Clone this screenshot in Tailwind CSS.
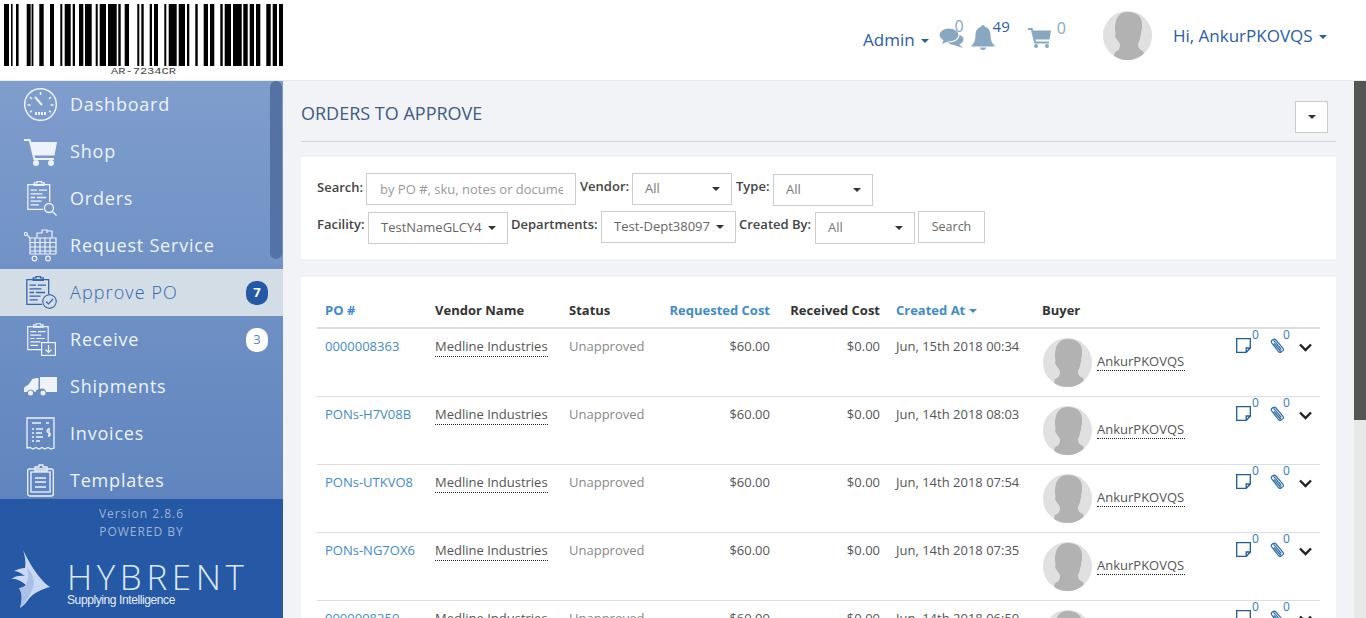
<!DOCTYPE html>
<html lang="en">
<head>
    <meta charset="UTF-8">
    <title>Orders to approve</title>
    <script src="https://cdn.jsdelivr.net/npm/@tailwindcss/browser@4"></script>
</head>
<body class="h-[618px] w-[1366px] overflow-hidden bg-white font-['Open_Sans',sans-serif] text-[13px] text-[#555]">

    <!-- shared shapes -->
    <svg class="hidden">
        <symbol id="avatar" viewBox="0 0 49 49">
            <rect width="49" height="49" fill="#e0e0e0"/>
            <path fill="#b2b2b2" d="M25 1c8 0 14 4 14 12 0 4 0 6-1 8 1 2-1 4-1 7-1 3-2 4-2 6 0 3 2 5 5 6 l3 9H10l2-8c3-1 5-3 5-7 0-3-3-4-5-9 1-2 0-4 0-7C12 7 16 1 25 1z"/>
        </symbol>
        <symbol id="board" viewBox="0 0 34 36">
            <g fill="none" stroke="currentColor" stroke-width="1.4">
                <path d="M7 4h19v19M19 31H2V4h5"/>
                <path d="M9 4V2h3V0.7h5V2h3v2.6H9z"/>
                <path d="M5 10h7M14 10h9M5 14h13M5 18h5M12 18h10M5 22h12M5 26h9"/>
            </g>
        </symbol>
    </svg>

    <!-- Top bar -->
    <header class="flex h-[81px] border-b border-[#e6e9ee] bg-white">
        <div class="w-[283px] shrink-0">
            <svg width="283" height="80" viewBox="0 0 283 80">
                <path fill="#000" d="M4 4h5v62H4zM11 4h1.6v62H11zM16 4h2.6v62H16zM26.7 4h4v62h-4zM31.6 4h1.8v62h-1.8zM39.3 4h4.4v62h-4.4zM50 4h4v62h-4zM60.3 4h2v62h-2zM64.7 4h6v62h-6zM72.7 4h2.3v62h-2.3zM79 4h4.3v62H79zM85 4h6.7v62H85zM95.7 4h2v62h-2zM99.7 4h6.3v62h-6.3zM108 4h8.7v62H108zM118.3 4h2.4v62h-2.4zM124.7 4h4.3v62h-4.3zM137.3 4h2v62h-2zM141.3 4h2.4v62h-2.4zM149.7 4h2.3v62h-2.3zM154 4h4v62h-4zM164.3 4h2v62h-2zM168.7 4h8v62h-8zM178.7 4h6.3v62h-6.3zM187 4h2.3v62H187zM195.3 4h2.4v62h-2.4zM203.7 4h4.3v62h-4.3zM210 4h4.3v62H210zM220.3 4h2.4v62h-2.4zM224.7 4h6.3v62h-6.3zM233 4h8.7v62H233zM243.3 4h4.4v62h-4.4zM249.7 4h4.3v62h-4.3zM256 4h4.3v62H256zM266.3 4h4.4v62h-4.4zM272.7 4h4.3v62h-4.3zM279 4h4v62h-4z"/>
                <text x="111" y="74" textLength="65" lengthAdjust="spacingAndGlyphs" font-family="Liberation Mono, monospace" font-size="9" fill="#444">AR-7234CR</text>
            </svg>
        </div>
        <div class="flex flex-1 text-[#2a5ca8]">
            <span class="ml-[580px] mt-[28px] text-[17px] leading-[24px]">Admin</span>
            <span class="ml-[6px] mt-[39px] h-0 w-0 border-x-[4px] border-t-[4px] border-x-transparent border-t-[#2a5ca8]"></span>
            <!-- chat -->
            <div class="ml-[10px] mt-[15px] flex h-[34px] w-[32px] text-[#88a8c2]">
                <svg class="mt-[13px] h-[20px] w-[25px] shrink-0" viewBox="0 0 25 20" fill="currentColor">
                    <ellipse cx="16" cy="11.500" rx="8.500" ry="5.500"/>
                    <path d="M19 15l5 5-9-3z"/>
                    <ellipse cx="10" cy="7" rx="10" ry="7" stroke="#fff" stroke-width="1.200"/>
                    <path d="M5 11l-2 5 7-3z"/>
                </svg>
                <span class="-ml-[9px] h-fit text-[16px] leading-[22px]">0</span>
            </div>
            <!-- bell -->
            <div class="ml-[0px] mt-[14px] flex">
                <svg class="mt-[11px] h-[25px] w-[24px] shrink-0 text-[#88a8c2]" viewBox="0 0 24 25" fill="currentColor">
                    <path d="M12 0c1 0 1.800.8 1.800 1.800 4 1 5.700 4.300 5.700 8.200 0 5 1.500 8.500 4 10.500v1H.5v-1C3 18.500 4.500 15 4.500 10c0-3.900 1.700-7.200 5.700-8.200C10.200.8 11 0 12 0zM9 22.500h6c0 1.500-1.300 2.500-3 2.500s-3-1-3-2.500z"/>
                </svg>
                <span class="-ml-[2px] mt-[1px] h-fit text-[15px] leading-[22px] text-[#2a5ca8]">49</span>
            </div>
            <!-- cart -->
            <div class="ml-[18px] mt-[17px] flex text-[#88a8c2]">
                <svg class="mt-[11px] h-[20px] w-[23px] shrink-0" viewBox="0 0 23 20" fill="currentColor">
                    <path d="M0 0h4.500l.7 2.500H23l-1.500 9H7.500l.4 2H21v2H6.300L3 2H0z"/>
                    <circle cx="8" cy="18" r="2"/><circle cx="19" cy="18" r="2"/>
                </svg>
                <span class="ml-[6px] h-fit text-[16px] leading-[22px]">0</span>
            </div>
            <svg class="ml-[37px] mt-[11px] h-[49px] w-[49px] rounded-full"><use href="#avatar"/></svg>
            <span class="ml-[21px] mt-[24px] h-fit text-[17px] leading-[24px]">Hi, AnkurPKOVQS</span>
            <span class="ml-[6px] mt-[35px] h-0 w-0 border-x-[4px] border-t-[4px] border-x-transparent border-t-[#2a5ca8]"></span>
        </div>
    </header>

    <div class="flex h-[537px]">
        <!-- Sidebar -->
        <aside class="relative flex w-[283px] shrink-0 flex-col">
            <nav class="h-[418px] overflow-hidden bg-linear-to-b from-[#7f9dcd] to-[#6085be] text-[18px] tracking-[0.8px] text-[#eef3fb]">
                <a class="flex h-[47px] items-center">
                    <svg class="ml-[24px] h-[33px] w-[33px]" viewBox="0 0 33 33" fill="none" stroke="currentColor" stroke-width="1.500">
                        <circle cx="16.500" cy="16.500" r="15.800"/>
                        <path d="M16.500 4v3M6 9l2 2M27 9l-2 2M3.500 17h3M26.500 17h3M6 24l2-1M27 24l-2-1"/>
                        <path d="M11 9l7 8" stroke-width="2"/>
                        <path d="M12 24v3M15 24v3M18 24v3M21 24v3" stroke-width="2"/>
                    </svg>
                    <span class="ml-[13px]">Dashboard</span>
                </a>
                <a class="flex h-[47px] items-center">
                    <svg class="ml-[24px] mt-[2px] h-[27px] w-[33px]" viewBox="0 0 33 27" fill="currentColor">
                        <path d="M0 0h6l1.500 3H33l-2.500 13.500H10.500l.7 2.500H30v2H9.500L5 2H0z"/>
                        <circle cx="12" cy="24" r="3"/><circle cx="27" cy="24" r="3"/>
                    </svg>
                    <span class="ml-[13px]">Shop</span>
                </a>
                <a class="flex h-[47px] items-center">
                    <div class="relative ml-[26px] h-[35px] w-[31px]">
                        <svg class="h-[33px] w-[31px]"><use href="#board"/></svg>
                        <svg class="absolute bottom-0 right-0 h-[14px] w-[14px]" viewBox="0 0 14 14" fill="none" stroke="currentColor" stroke-width="1.300"><circle cx="6" cy="6" r="4.500"/><path d="M9.500 9.500L13.500 13.500"/></svg>
                    </div>
                    <span class="ml-[13px]">Orders</span>
                </a>
                <a class="flex h-[47px] items-center">
                    <svg class="ml-[24px] h-[33px] w-[33px]" viewBox="0 0 33 33" fill="none" stroke="currentColor" stroke-width="1.200">
                        <circle cx="1.800" cy="5" r="1.500"/>
                        <path d="M3 6l3 3v16h26"/>
                        <path d="M6 9h26v16M6 13.500h26M6 18h26M6 22h26M11 9v16M16 9v16M21 9v16M26 9v16"/>
                        <path d="M13 9V4h5V1h5v3M23 2h5v7"/>
                        <circle cx="10.500" cy="29.500" r="2.300"/><circle cx="24" cy="29.500" r="2.300"/>
                    </svg>
                    <span class="ml-[13px]">Request Service</span>
                </a>
                <a class="flex h-[47px] items-center bg-[#d3dde6] text-[#3465ad]">
                    <div class="relative ml-[25px] h-[33px] w-[32px]">
                        <svg class="h-[33px] w-[31px]"><use href="#board"/></svg>
                        <svg class="absolute bottom-0 right-0 h-[15px] w-[15px] rounded-full bg-[#d3dde6]" viewBox="0 0 15 15" fill="none" stroke="currentColor" stroke-width="1.200"><circle cx="7.500" cy="7.500" r="6.800"/><path d="M4 7.500l2.500 2.500 4.500-5"/></svg>
                    </div>
                    <span class="ml-[13px] font-light tracking-[1.100px]">Approve PO</span>
                    <span class="ml-auto mr-[15px] flex h-[24px] w-[22px] items-center justify-center rounded-[10px] bg-[#2558a5] text-[13px] font-bold tracking-normal text-white">7</span>
                </a>
                <a class="flex h-[47px] items-center">
                    <div class="relative ml-[26px] h-[33px] w-[30px]">
                        <svg class="h-[31px] w-[29px]"><use href="#board"/></svg>
                        <svg class="absolute bottom-0 right-0 h-[14px] w-[15px] bg-[#6e90c4]" viewBox="0 0 15 14" fill="none" stroke="currentColor" stroke-width="1.200"><rect x="0.600" y="0.600" width="13.800" height="12.800"/><path d="M7.500 3v7M4.500 7.500l3 3 3-3"/></svg>
                    </div>
                    <span class="ml-[14px]">Receive</span>
                    <span class="ml-auto mr-[15px] flex h-[24px] w-[22px] items-center justify-center rounded-[10px] bg-white text-[13px] tracking-normal text-[#5b80bb]">3</span>
                </a>
                <a class="flex h-[47px] items-center">
                    <svg class="ml-[24px] h-[19px] w-[33px]" viewBox="0 0 33 19" fill="currentColor">
                        <path d="M16 0h17v15H22a4 4 0 0 0-6-3z"/>
                        <path d="M14.500 1v11a4 4 0 0 0-3 3h-1a4 4 0 0 0-7.500 0H0v-4c1-2 4-2.500 5-4l3-4.500c1-1 4-1.500 6.500-1.500z"/>
                        <circle cx="6.500" cy="16" r="2.500"/><circle cx="19" cy="16" r="2.500"/>
                    </svg>
                    <span class="ml-[13px]">Shipments</span>
                </a>
                <a class="flex h-[47px] items-center">
                    <svg class="ml-[26px] h-[33px] w-[29px]" viewBox="0 0 29 33" fill="none" stroke="currentColor" stroke-width="1.300">
                        <path d="M1 31V1h27v30l-3 1-3-1.500-3 1.500-3-1.500-3 1.500-3-1.500-3 1.500-3-1.500z"/>
                        <path d="M6 6h9M20 6h3M6 12h2M10 12h7M6 16h2M10 16h6M6 20h2M10 20h7M6 24h2M10 24h4"/>
                        <path d="M24 12c-3-1-4 3-1.500 3.500S25 19 22 19M23 11v9"/>
                    </svg>
                    <span class="ml-[15px]">Invoices</span>
                </a>
                <a class="flex h-[47px] items-center">
                    <svg class="ml-[27px] h-[33px] w-[27px]" viewBox="0 0 27 33" fill="none" stroke="currentColor" stroke-width="1.300">
                        <rect x="0.700" y="5" width="25.600" height="27" rx="2"/>
                        <rect x="4" y="8" width="19" height="20"/>
                        <path d="M8 5V3h4V1h4v2h4v4H8zM8 14h11M8 18h11M8 23h11"/>
                    </svg>
                    <span class="ml-[16px]">Templates</span>
                </a>
            </nav>
            <!-- sidebar scrollbar -->
            <div class="absolute right-[1px] top-0 h-[178px] w-[12px] rounded-[6px] bg-[#5473a3]"></div>

            <div class="flex-1 bg-[#2558a5]">
                <p class="pt-[6px] text-center text-[12px] leading-[18px] tracking-[1px] text-[#9fb3d4]">Version 2.8.6<br>POWERED BY</p>
                <div class="mt-[20px] flex items-start">
                    <svg class="ml-[11px] -mt-[11px] h-[58px] w-[40px]" viewBox="0 0 40 58">
                        <path fill="#c9d9f4" d="M12 0c4 8 14 28 27 37-8 2-17 6-22 13-2 3-5 6-8 8 2-7 3-14-1-20 3 0 5-1 7-3-4-3-10-7-15-6 4-3 9-4 14-3-3-2-7-5-11-5 4-2 8-3 11-3C15 12 14 6 12 0z"/>
                        <path fill="#a9c1e9" d="M16 18c6 6 8 12 6 20-2 5-7 14-13 20 2-7 3-14-1-20 3 0 5-1 7-3 2-5 3-10 1-17z"/>
                    </svg>
                    <div class="ml-[16px]">
                        <div class="text-[35px] font-light leading-[32px] tracking-[4.600px] text-[#dce8f8]">HYBRENT</div>
                        <div class="font-['Liberation_Sans',sans-serif] text-[12px] leading-[14px] tracking-[-0.400px] text-[#e8effa]">Supplying Intelligence</div>
                    </div>
                </div>
            </div>
        </aside>

        <!-- Main content -->
        <main class="h-full flex-1 overflow-hidden bg-[#f1f3f7] pl-[18px] pr-[18px]">
            <div class="flex h-[61px] items-center justify-between border-b border-[#d4d6db] pr-[8px]">
                <h2 class="mt-[5px] text-[18px] text-[#3e5c82]">ORDERS TO APPROVE</h2>
                <button class="mt-[11px] flex h-[32px] w-[33px] items-center justify-center border border-[#cccccc] bg-white">
                    <span class="h-0 w-0 border-x-[4px] border-t-[4px] border-x-transparent border-t-[#333]"></span>
                </button>
            </div>

            <!-- Filters -->
            <section class="mt-[15px] h-[102px] bg-white pl-[16px] pt-[16px] text-[13px] text-[#444]">
                <div class="flex h-[32px] items-start">
                    <label class="mt-[5px] w-[49px] font-semibold leading-[18px]">Search:</label>
                    <input placeholder="by PO #, sku, notes or document" class="h-[32px] w-[210px] border border-[#cccccc] pl-[13px] pr-[12px] text-[13px] placeholder:text-[#999] outline-none">
                    <label class="ml-[4px] mt-[4px] w-[52px] font-semibold leading-[18px]">Vendor:</label>
                    <div class="flex h-[32px] w-[100px] items-center justify-between border border-[#cccccc] pl-[12px] pr-[11px] text-[#777]"><span>All</span><span class="h-0 w-0 border-x-[4px] border-t-[4px] border-x-transparent border-t-[#333]"></span></div>
                    <label class="ml-[4px] mt-[4px] w-[37px] font-semibold leading-[18px]">Type:</label>
                    <div class="mt-[1px] flex h-[32px] w-[100px] items-center justify-between border border-[#cccccc] pl-[12px] pr-[11px] text-[#777]"><span>All</span><span class="h-0 w-0 border-x-[4px] border-t-[4px] border-x-transparent border-t-[#333]"></span></div>
                </div>
                <div class="mt-[6px] flex items-start">
                    <label class="mt-[4px] w-[51px] font-semibold leading-[18px]">Facility:</label>
                    <div class="mt-[1px] flex h-[32px] w-[140px] items-center justify-between border border-[#cccccc] pl-[12px] pr-[11px] text-[#666]"><span>TestNameGLCY4</span><span class="h-0 w-0 border-x-[4px] border-t-[4px] border-x-transparent border-t-[#333]"></span></div>
                    <label class="ml-[3px] mt-[4px] w-[90px] font-semibold leading-[18px]">Departments:</label>
                    <div class="flex h-[32px] w-[135px] items-center justify-between border border-[#cccccc] pl-[12px] pr-[11px] text-[#666]"><span>Test-Dept38097</span><span class="h-0 w-0 border-x-[4px] border-t-[4px] border-x-transparent border-t-[#333]"></span></div>
                    <label class="ml-[3px] mt-[4px] w-[76px] font-semibold leading-[18px]">Created By:</label>
                    <div class="mt-[1px] flex h-[32px] w-[100px] items-center justify-between border border-[#cccccc] pl-[12px] pr-[11px] text-[#777]"><span>All</span><span class="h-0 w-0 border-x-[4px] border-t-[4px] border-x-transparent border-t-[#333]"></span></div>
                    <button class="ml-[3px] h-[32px] w-[67px] border border-[#cccccc] text-[12.500px] text-[#666]">Search</button>
                </div>
            </section>

            <!-- Orders table -->
            <section class="mt-[18px] bg-white px-[16px] pt-[24px]">
                <table class="w-[1003px] table-fixed border-collapse">
                    <colgroup>
                        <col class="w-[110px]"><col class="w-[134px]"><col class="w-[92px]"><col class="w-[125px]"><col class="w-[110px]"><col class="w-[146px]"><col class="w-[286px]">
                    </colgroup>
                    <thead>
                        <tr class="h-[27px] border-b-2 border-[#dddddd] text-[13px] font-bold text-[#333]">
                            <th class="px-[8px] pb-[8px] text-left leading-[18px] text-[#428bca]">PO #</th>
                            <th class="px-[8px] pb-[8px] text-left leading-[18px]">Vendor Name</th>
                            <th class="px-[8px] pb-[8px] text-left leading-[18px]">Status</th>
                            <th class="px-[8px] pb-[8px] text-right leading-[18px] text-[#428bca]">Requested Cost</th>
                            <th class="px-[8px] pb-[8px] text-right leading-[18px]">Received Cost</th>
                            <th class="px-[8px] pb-[8px] text-left leading-[18px] text-[#428bca]">Created At <span class="mb-[2px] inline-block h-0 w-0 border-x-[4px] border-t-[4px] border-x-transparent border-t-[#428bca]"></span></th>
                            <th class="px-[8px] pb-[8px] text-left leading-[18px]">Buyer</th>
                        </tr>
                    </thead>
                    <tbody id="rows"></tbody>
                </table>
            </section>
        </main>

        <!-- Page scrollbar -->
        <div class="w-[12px] shrink-0 bg-[#e8e8e8]">
            <div class="h-[339px] bg-[#555555]"></div>
        </div>
    </div>

    <script>
        const orders = [
            ["0000008363", "Jun, 15th 2018 00:34"],
            ["PONs-H7V08B", "Jun, 14th 2018 08:03"],
            ["PONs-UTKVO8", "Jun, 14th 2018 07:54"],
            ["PONs-NG7OX6", "Jun, 14th 2018 07:35"],
            ["0000008359", "Jun, 14th 2018 06:50"]
        ];
        document.getElementById("rows").innerHTML = orders.map(o => `
            <tr class="h-[68px] border-b border-[#dddddd] align-top leading-[18px]">
                <td class="px-[8px] pt-[8px] text-[#428bca]">${o[0]}</td>
                <td class="px-[8px] pt-[8px]"><span class="border-b border-dotted border-[#222] pb-[1px]">Medline Industries</span></td>
                <td class="px-[8px] pt-[8px] text-[#888]">Unapproved</td>
                <td class="px-[8px] pt-[8px] text-right">$60.00</td>
                <td class="px-[8px] pt-[8px] text-right">$0.00</td>
                <td class="px-[8px] pt-[8px]">${o[1]}</td>
                <td class="pl-[9px] pt-[9px]">
                    <div class="flex items-start">
                        <svg class="h-[49px] w-[49px] shrink-0 rounded-full"><use href="#avatar"/></svg>
                        <span class="ml-[5px] mt-[14px] w-[88px] shrink-0 border-b border-dotted border-[#222]">AnkurPKOVQS</span>
                        <svg class="ml-[51px] h-[15px] w-[15px] shrink-0 text-[#1f5c99]" viewBox="0 0 15 15" fill="none" stroke="currentColor" stroke-width="1.300"><path d="M.7.7h13.600v9.500l-4.100 4.100H.7zM14 10h-3.800v4"/></svg>
                        <span class="ml-[1px] -mt-[12px] text-[12px] leading-[18px] text-[#337ab7]">0</span>
                        <svg class="ml-[11px] h-[15px] w-[15px] shrink-0 text-[#2f6ea8]" viewBox="0 0 15 15" fill="none" stroke="currentColor" stroke-width="1.200"><path d="M4 5.500l6 7c1.700 2 4.500-.3 2.800-2.400L6 2C4.300 0 .2 2.300 1.700 4.800l6.800 8.700c1 1 2 1.300 3 1"/><path d="M3.500 2.200l7.800 9.300"/></svg>
                        <span class="-ml-[2px] -mt-[12px] text-[12px] leading-[18px] text-[#337ab7]">0</span>
                        <svg class="ml-[9px] mt-[5px] h-[9px] w-[13px] shrink-0" viewBox="0 0 13 9" fill="none" stroke="#222" stroke-width="2.400"><path d="M1 1.500l5.500 5.500 5.500-5.500"/></svg>
                    </div>
                </td>
            </tr>`).join("");
    </script>
</body>
</html>
